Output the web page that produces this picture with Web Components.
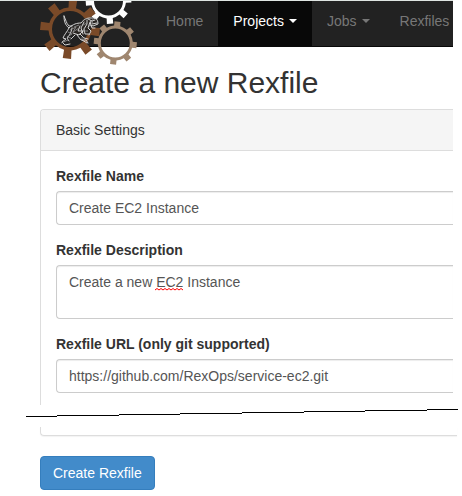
<!DOCTYPE html>
<html lang="en">
<head>
<meta charset="utf-8">
<title>Create a new Rexfile</title>
<style>
  body { margin: 0; background: #fff; color: #333; font: 14px/20px "Liberation Sans", Arial, sans-serif; }
</style>
</head>
<body>
<rex-page></rex-page>
<script>
const define = (name, html, setup) => customElements.define(name, class extends HTMLElement {
  connectedCallback() {
    if (this.shadowRoot) return;
    const t = document.createElement('template');
    t.innerHTML = html;
    const root = this.attachShadow({ mode: 'open' });
    root.append(t.content.cloneNode(true));
    if (setup) setup(this, root);
  }
});

// A gear outline: eight flat teeth on a round rim, with a round hole.
function gear(cx, cy, hole, rim, tip, turn, color) {
  const at = (r, deg) => {
    const a = deg * Math.PI / 180;
    return (cx + r * Math.cos(a)).toFixed(2) + ' ' + (cy + r * Math.sin(a)).toFixed(2);
  };
  let d = 'M' + at(rim, turn - 10);
  for (let i = 0; i < 8; i++) {
    const a = turn + i * 45;
    d += 'L' + at(tip, a - 8) + 'L' + at(tip, a + 8) + 'L' + at(rim, a + 10) +
      'A' + rim + ' ' + rim + ' 0 0 1 ' + at(rim, a + 35);
  }
  d += 'Z M' + (cx + hole) + ' ' + cy +
    'a' + hole + ' ' + hole + ' 0 1 0 ' + (-2 * hole) + ' 0a' + hole + ' ' + hole + ' 0 1 0 ' + (2 * hole) + ' 0Z';
  return `<path fill="${color}" fill-rule="evenodd" d="${d}"/>`;
}

define('rex-logo', `
  <style>
    :host { display: block; flex: none; width: 97px; height: 45px; }
    a, svg { display: block; }
    svg { overflow: visible; }
  </style>
  <a href="#" aria-label="Rex">
    <svg width="97" height="66" viewBox="40 1 97 66">
      <clipPath id="c"><rect x="40" y="1" width="98" height="67"/></clipPath>
      <g clip-path="url(#c)">
        ${gear(108.5, 1, 14.5, 17.5, 23, 41, '#fff')}
        ${gear(70, 29, 18, 21.5, 30, 6, '#7a4a28')}
        ${gear(115.3, 43, 14.5, 17.5, 21.7, 6, '#9f866f')}
      </g>
      <path fill="#2b2724" d="M70 28L80 23 86 18 97 19 98 25 92 27 90 34 84 35 72 35Z"/>
      <g fill="none" stroke="#e2e2e2" stroke-width=".9" stroke-linecap="round" stroke-linejoin="round">
        <path d="M64 16c0 5 1 9 5 12 4-4 8-5 12-5 3-4 6-5 9-5l5 0c2 1 3 3 3 6l-5 2-2-1 1 3 3 0"/>
        <path d="M64 16c2 4 2 7 5 10l3 0M69 28c-2 4-5 7-6 10l3 1-4 3 3 3 5-1M72 28c-1 5-2 7-5 10l2 3"/>
        <path d="M73 33l6 2 4-4M75 35l-4 4M77 35l4 5 5 0 2 3M80 34l4 4 4 1M82 40l5 3"/>
        <path d="M80 26l-2 5 5 0M84 22l-3 6 2 6M87 20l0 4-3 5 1 5 4 0M90 22l-2 6 3 3-2 4M91 21l-1 5M88 19l4 2 3-1M92 24l5-1"/>
      </g>
      <path fill="none" stroke="#969696" stroke-width=".8" d="M70 30l6-3-3 5 6-4M74 27l5-2M68 32l4 2-5 3 4 1M61 43l7-3M83 25l4-2M85 27l-2 4 5 0M81 38l4 0M93 19l-1 5"/>
    </svg>
  </a>`);

define('rex-nav-item', `
  <style>
    :host { display: block; flex: none; color: #777; margin-bottom: -1px; }
    :host([active]) { color: #fff; background: #080808; }
    a { display: flex; align-items: center; gap: 5px; padding: 10px 15px 16px; color: inherit; text-decoration: none; white-space: nowrap; }
    .caret { display: none; border: 4px solid transparent; border-top-color: currentColor; border-bottom: 0; }
    :host([menu]) .caret { display: block; }
  </style>
  <a href="#"><slot></slot><span class="caret"></span></a>`);

define('rex-navbar', `
  <style>
    :host { display: block; }
    nav { display: flex; align-items: flex-start; padding-left: 40px; background: #222; border-top: 1px solid #dfe5e2; border-bottom: 1px solid #080808; }
    .items { display: flex; padding-left: 14px; flex: 1; min-width: 0; }
  </style>
  <nav><slot name="logo"></slot><div class="items"><slot></slot></div></nav>`);

define('rex-field', `
  <style>
    :host { display: block; margin-bottom: 15px; }
    label { display: block; font-weight: 700; margin-bottom: 5px; }
    .box { position: relative; }
    input, textarea { display: block; box-sizing: border-box; width: 100%; height: 34px; margin: 0; padding: 6px 12px;
      font: inherit; color: #555; background: #fff; border: 1px solid #ccc; border-right: 0; border-radius: 4px 0 0 4px;
      box-shadow: inset 0 1px 1px rgba(0,0,0,.075); outline: 0; resize: none; overflow: hidden; }
    textarea { height: 54px; }
    .mark { position: absolute; left: 99px; top: 23px; display: none; }
    :host([multiline]) .mark { display: block; }
  </style>
  <label for="f"></label>
  <div class="box"></div>`, (host, root) => {
  root.querySelector('label').textContent = host.getAttribute('label');
  const control = document.createElement(host.hasAttribute('multiline') ? 'textarea' : 'input');
  control.id = 'f';
  control.spellcheck = false;
  control.value = host.getAttribute('value');
  const box = root.querySelector('.box');
  box.append(control);
  // Spelling mark under the unknown word.
  box.insertAdjacentHTML('beforeend',
    '<svg class="mark" width="28" height="3" viewBox="0 0 28 3"><path d="M0 2l2-1.500 2 1.500 2-1.500 2 1.500 2-1.500 2 1.500 2-1.500 2 1.500 2-1.500 2 1.500 2-1.500 2 1.500 2-1.500 2 1.500" fill="none" stroke="#f00"/></svg>');
});

define('rex-panel', `
  <style>
    :host { display: block; }
    .top { margin-right: 9px; border: 1px solid #ddd; border-width: 1px 0 0 1px; border-top-left-radius: 4px; overflow: hidden; }
    header { padding: 10px 15px; background: #f5f5f5; border-bottom: 1px solid #ddd; }
    .body { padding: 15px 0 0 15px; margin-bottom: -3px; }
    .cut { height: 22px; margin: 0 4px 0 -14px; }
    .cut svg { display: block; width: 100%; height: 100%; }
    .end { height: 8px; margin-right: 5px; border: 1px solid #ddd; border-width: 0 0 1px 1px; border-bottom-left-radius: 4px; box-shadow: 0 1px 1px rgba(0,0,0,.05); }
  </style>
  <section>
    <div class="top"><header><slot name="title"></slot></header><div class="body"><slot></slot></div></div>
    <div class="cut"><svg viewBox="0 0 432 22" preserveAspectRatio="none" shape-rendering="crispEdges"><path d="M0 11.500H31M31 10.500H93M93 9.500H154M154 8.500H216M216 7.500H278M278 6.500H339M339 5.500H401M401 4.500H432" stroke="#000"/></svg></div>
    <div class="end"></div>
  </section>`);

define('rex-button', `
  <style>
    :host { display: block; }
    button { font: inherit; color: #fff; background: #428bca; border: 1px solid #357ebd; border-radius: 4px; padding: 6px 12px; margin: 0; }
  </style>
  <button type="submit"><slot></slot></button>`);

define('rex-page', `
  <style>
    :host { display: block; overflow: hidden; }
    rex-navbar { margin-right: 9px; }
    main { padding: 19px 0 6px 40px; }
    h2 { margin: 0 0 10px; font-size: 30px; line-height: 33px; font-weight: 400; }
    rex-panel { margin-bottom: 20px; }
  </style>
  <rex-navbar>
    <rex-logo slot="logo"></rex-logo>
    <rex-nav-item>Home</rex-nav-item>
    <rex-nav-item active menu>Projects</rex-nav-item>
    <rex-nav-item menu>Jobs</rex-nav-item>
    <rex-nav-item>Rexfiles</rex-nav-item>
  </rex-navbar>
  <main>
    <h2>Create a new Rexfile</h2>
    <rex-panel>
      <span slot="title">Basic Settings</span>
      <rex-field label="Rexfile Name" value="Create EC2 Instance"></rex-field>
      <rex-field multiline label="Rexfile Description" value="Create a new EC2 Instance"></rex-field>
      <rex-field label="Rexfile URL (only git supported)" value="https://github.com/RexOps/service-ec2.git"></rex-field>
    </rex-panel>
    <rex-button>Create Rexfile</rex-button>
  </main>`);
</script>
</body>
</html>
